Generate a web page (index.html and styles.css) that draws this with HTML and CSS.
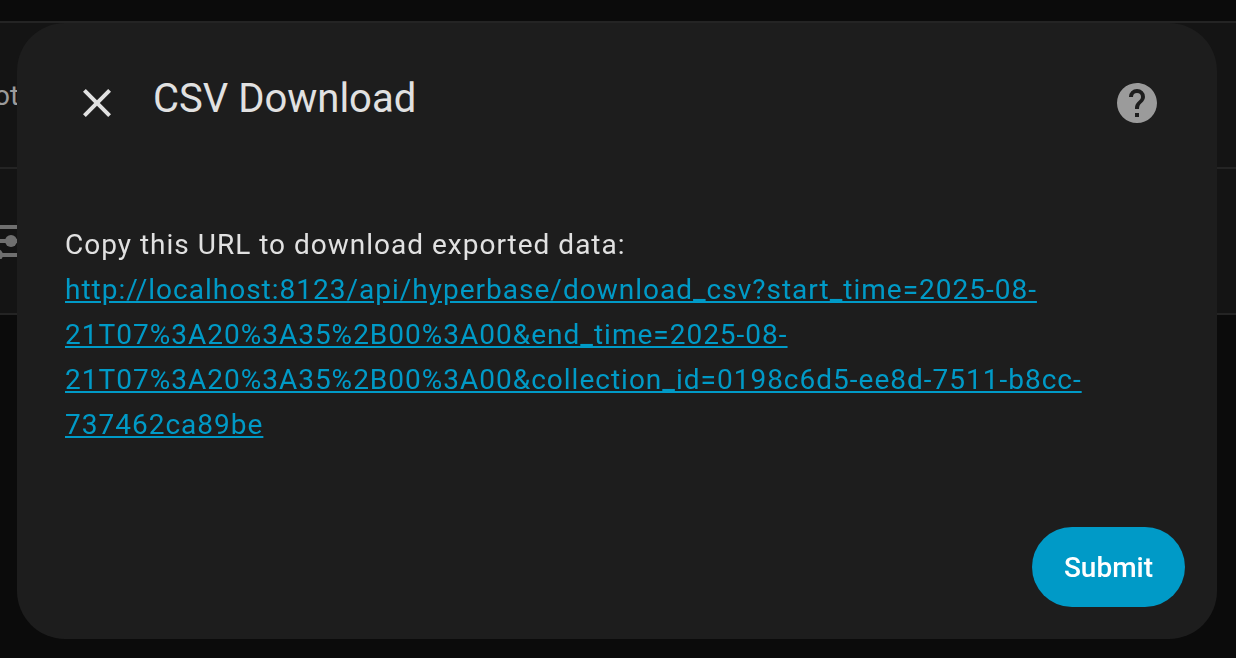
FILE: index.html
```
<!DOCTYPE html>
<html lang="en">
<head>
<meta charset="utf-8">
<meta name="viewport" content="width=device-width, initial-scale=1">
<title>CSV Download</title>
<link rel="stylesheet" href="styles.css">
</head>
<body>
<div class="page">
  <div class="toolbar"></div>
  <div class="row"><span class="row-text">ot</span></div>
  <div class="row">
    <svg class="tune" viewBox="0 0 17 36" aria-hidden="true">
      <path d="M0 2h17v4H0zM0 16h17v4H0zM0 30h17v4H0z"/>
      <circle cx="11" cy="18" r="6"/>
      <circle cx="-3" cy="32" r="6"/>
    </svg>
  </div>
</div>
<div class="scrim">
  <section class="dialog" role="dialog" aria-labelledby="title">
    <header class="dialog-header">
      <button class="icon-button" type="button" aria-label="Close">
        <svg class="icon" viewBox="0 0 24 24"><path d="M19 6.41L17.59 5 12 10.59 6.41 5 5 6.41 10.59 12 5 17.59 6.41 19 12 13.41 17.59 19 19 17.59 13.41 12z"/></svg>
      </button>
      <h1 class="title" id="title">CSV Download</h1>
      <a class="icon-button help" href="#help" aria-label="Help">
        <svg class="icon" viewBox="0 0 24 24"><path d="M15.07 11.25l-.9.92C13.45 12.89 13 13.5 13 15h-2v-.5c0-1.11.45-2.11 1.17-2.83l1.24-1.26c.37-.36.59-.86.59-1.41a2 2 0 0 0-2-2 2 2 0 0 0-2 2H8a4 4 0 0 1 4-4 4 4 0 0 1 4 4 3.2 3.2 0 0 1-.93 2.25M13 19h-2v-2h2M12 2A10 10 0 0 0 2 12a10 10 0 0 0 10 10 10 10 0 0 0 10-10c0-5.53-4.5-10-10-10z"/></svg>
      </a>
    </header>
    <div class="content">
      <p class="text">Copy this URL to download exported data:<br><a class="link" href="http://localhost:8123/api/hyperbase/download_csv?start_time=2025-08-21T07%3A20%3A35%2B00%3A00&amp;end_time=2025-08-21T07%3A20%3A35%2B00%3A00&amp;collection_id=0198c6d5-ee8d-7511-b8cc-737462ca89be">http://localhost:8123/api/hyperbase/download_csv?start_time=2025-08-21T07%3A20%3A35%2B00%3A00&amp;end_time=2025-08-21T07%3A20%3A35%2B00%3A00&amp;collection_id=0198c6d5-ee8d-7511-b8cc-737462ca89be</a></p>
    </div>
    <footer class="actions">
      <button class="submit" type="button">Submit</button>
    </footer>
  </section>
</div>
</body>
</html>
```
FILE: styles.css
```
* {
  box-sizing: border-box;
}

body {
  margin: 0;
  background: #0b0b0b;
  color: #e1e1e1;
  font-family: Roboto, "Liberation Sans", sans-serif;
  font-size: 28px;
}

.page {
  min-height: 100vh;
  overflow: hidden;
}

.toolbar {
  height: 23px;
  border-bottom: 2px solid #242424;
}

.row {
  display: flex;
  align-items: center;
  height: 146px;
  background: #141414;
  border-bottom: 2px solid #242424;
}

.row-text {
  margin-left: -6px;
  color: #9b9b9b;
}

.tune {
  width: 17px;
  height: 36px;
  fill: #6f6f6f;
}

.scrim {
  position: fixed;
  inset: 0;
  display: flex;
  padding: 23px 19px 19px 17px;
}

.dialog {
  display: flex;
  flex-direction: column;
  flex: 1;
  border-radius: 48px;
  background: #1d1d1d;
}

.dialog-header {
  display: flex;
  align-items: flex-start;
  padding: 48px 48px 0;
}

.icon-button {
  display: flex;
  padding: 8px;
  border: 0;
  background: none;
  color: #e1e1e1;
}

.help {
  color: #9b9b9b;
}

.icon {
  width: 48px;
  height: 48px;
  fill: currentColor;
}

.title {
  flex: 1;
  margin: 0;
  padding-left: 24px;
  font-size: 40px;
  font-weight: 400;
  line-height: 56px;
}

.content {
  flex: 1;
  padding: 87px 48px 0;
}

.text {
  margin: 0;
  line-height: 45px;
  letter-spacing: 1px;
}

.link {
  color: #009ac7;
}

.actions {
  display: flex;
  justify-content: flex-end;
  padding: 32px;
}

.submit {
  height: 80px;
  padding: 0 32px;
  border: 0;
  border-radius: 40px;
  background: #009ac7;
  color: #fff;
  font: 500 28px Roboto, "Liberation Sans", sans-serif;
}
```
